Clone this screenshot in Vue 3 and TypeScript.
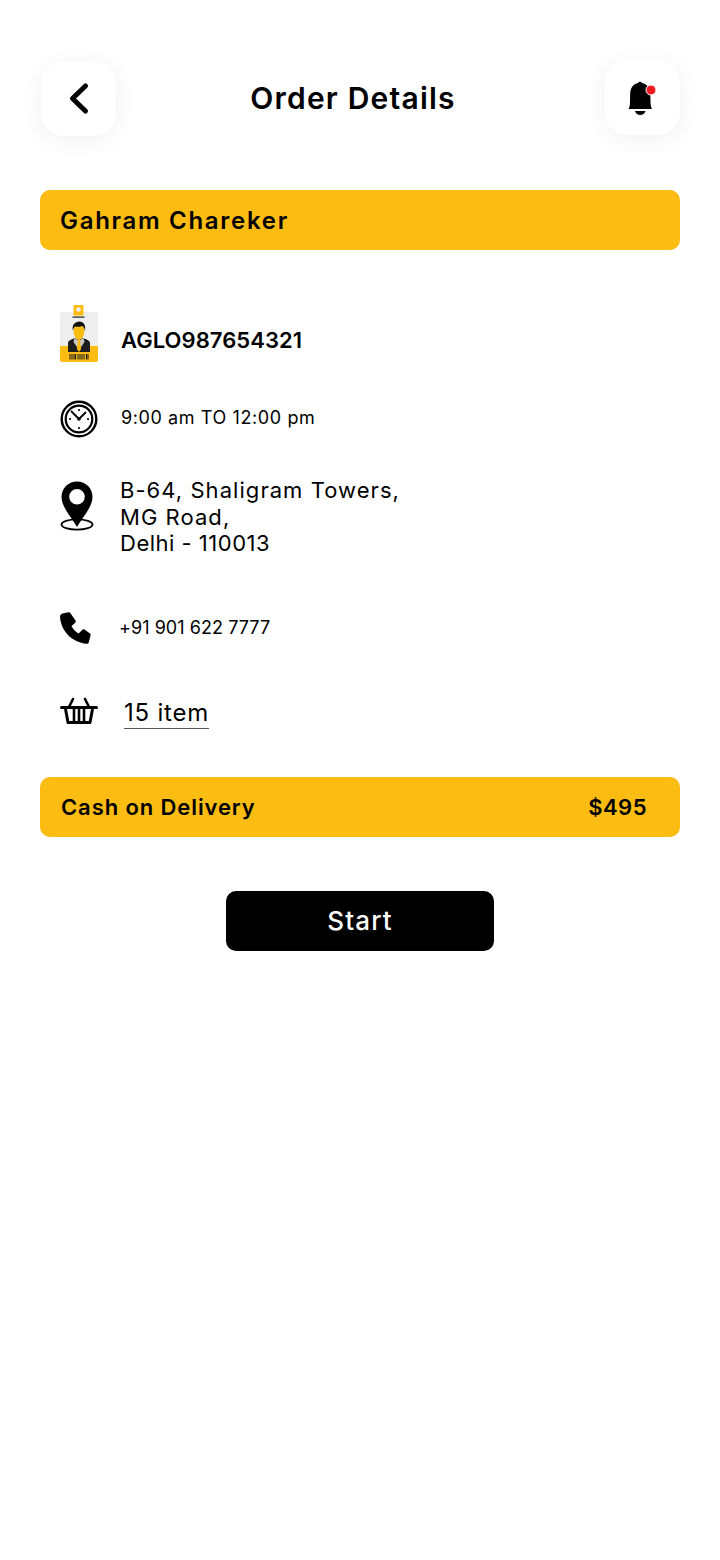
<script setup lang="ts">
const amount: string = '$495'
</script>

<template>
  <div class="page">
    <header class="head">
      <button class="tile back" aria-label="Back">
        <svg width="24" height="34" viewBox="0 0 24 34"><path d="M19.500 4 L6.500 16.500 L19.500 29" fill="none" stroke="#000" stroke-width="5" stroke-linecap="round" stroke-linejoin="round"/></svg>
      </button>
      <h1 class="title">Order Details</h1>
      <button class="tile bell" aria-label="Notifications">
        <svg width="34" height="38" viewBox="0 0 34 38">
          <path d="M11 4 a2.300 2.300 0 0 1 4 0 C20 5 23 9 23.300 14 L23.500 23 C23.600 26 24 28 25 30 H1.500 C2.500 28 3 26 3 23 L3.200 14 C3.500 9 6 5 11 4 Z" fill="#000"/>
          <path d="M8 32 H18.500 C17.800 34.500 15.500 36 13.200 36 S8.700 34.500 8 32 Z" fill="#000"/>
          <circle cx="24" cy="11" r="5" fill="#f01a1f" stroke="#fff" stroke-width="1"/>
        </svg>
      </button>
    </header>

    <div class="bar name-bar">Gahram Chareker</div>

    <section class="rows">
      <div class="row id-row">
        <svg class="ic" width="38" height="58" viewBox="0 0 38 58">
          <rect x="0" y="7" width="38" height="50" rx="2" fill="#eeeeee"/>
          <path d="M0 41 H38 V55 a2 2 0 0 1 -2 2 H2 a2 2 0 0 1 -2 -2 Z" fill="#fdbc11"/>
          <rect x="13.500" y="0" width="10" height="10.500" rx="1" fill="#fdbc11"/>
          <circle cx="18.500" cy="4.500" r="2.300" fill="#eee"/>
          <rect x="12.500" y="11.500" width="12" height="1.200" fill="#222"/>
          <path d="M8 47 V38 c0 -2 2 -3 7 -5 l4 2 l4 -2 c5 2 7 3 7 5 V47 Z" fill="#1d1d1d"/>
          <path d="M14.500 33 l4.500 3 l4.500 -3 l1 4 l-5.500 8 l-5.500 -8 Z" fill="#c9c9c9"/>
          <path d="M18 35 h2 l1.200 9 l-2.200 3 l-2.200 -3 Z" fill="#fdbc11"/>
          <ellipse cx="19" cy="26" rx="5.400" ry="9" fill="#fdbc11"/>
          <path d="M13 26 c-1.500 -6 2 -9.500 6.500 -9.500 c4 0 6.500 3.500 5.500 9.500 c-0.500 -3 -1.500 -4.500 -3 -5 c-2.500 1 -5 1 -7 0.500 c-1 1 -2 2.500 -2 4.500 Z" fill="#111"/>
          <path d="M10 49 v5.500 M12 49 v5.500 M14 49 v5.500 M15.500 49 v5.500 M18 49 v5.500 M20 49 v5.500 M22 49 v5.500 M24 49 v5.500 M26.500 49 v5.500 M28 49 v5.500" stroke="#222" stroke-width="1.100"/>
        </svg>
        <span class="code">AGLO987654321</span>
      </div>

      <div class="row time-row">
        <svg class="ic" width="38" height="38" viewBox="0 0 38 38">
          <circle cx="19" cy="19" r="17.300" fill="none" stroke="#000" stroke-width="2.400"/>
          <circle cx="19" cy="19" r="13.300" fill="none" stroke="#000" stroke-width="2.200"/>
          <path d="M19 19 L11.500 11.500 M19 19 L25.500 12.500" stroke="#000" stroke-width="1.800" stroke-linecap="round"/>
          <circle cx="19" cy="19" r="1.800" fill="#000"/>
          <circle cx="19" cy="10" r="1.100" fill="#000"/><circle cx="19" cy="28" r="1.100" fill="#000"/>
          <circle cx="10" cy="19" r="1.100" fill="#000"/><circle cx="28" cy="19" r="1.100" fill="#000"/>
        </svg>
        <span class="time">9:00 am TO 12:00 pm</span>
      </div>

      <div class="row addr-row">
        <svg class="ic" width="34" height="50" viewBox="0 0 34 50">
          <ellipse cx="17" cy="43.500" rx="15.500" ry="5.200" fill="none" stroke="#000" stroke-width="1.800"/>
          <path fill-rule="evenodd" d="M17 0.500 C8 0.500 1.500 7.500 1.500 16 C1.500 26 12 37 17 46 C22 37 32.500 26 32.500 16 C32.500 7.500 26 0.500 17 0.500 Z M17 8 a7.800 7.800 0 1 1 0 15.600 a7.800 7.800 0 1 1 0 -15.600 Z" fill="#000"/>
        </svg>
        <address class="addr">B-64, Shaligram Towers,<br>MG Road,<br><span class="zip">Delhi - 110013</span></address>
      </div>

      <div class="row phone-row">
        <svg class="ic" width="32" height="32" viewBox="0 0 32 32">
          <path d="M3.500 1.500 L9.500 0.300 C10.500 0.200 11 0.500 11.500 1.200 L16.500 8.500 C17 9.300 16.800 10 16.200 10.700 L12.500 14 C14 17 16.500 19.500 19.500 21.500 L23.500 17.800 C24.200 17.200 25 17.200 25.800 17.700 L31 21.500 C31.700 22 31.800 22.700 31.500 23.500 L29.800 30.200 C29.500 31.200 28.800 31.800 27.800 31.800 C13 30.500 2 19 1 5 C1 3 2 2 3.500 1.500 Z" fill="#000"/>
        </svg>
        <span class="phone">+91 901 622 7777</span>
      </div>

      <div class="row basket-row">
        <svg class="ic" width="38" height="28" viewBox="0 0 38 28">
          <path d="M1.500 10.500 H36.500" stroke="#000" stroke-width="3" stroke-linecap="round"/>
          <path d="M5.500 12 L8 25.500 H30 L32.500 12" fill="none" stroke="#000" stroke-width="3" stroke-linejoin="round"/>
          <path d="M14 12 V25 M19 12 V25 M24 12 V25" stroke="#000" stroke-width="2.600"/>
          <path d="M9 10 L13 2 M29 10 L25 2" stroke="#000" stroke-width="2.600" stroke-linecap="round"/>
        </svg>
        <span class="items">15 item</span>
      </div>
    </section>

    <div class="bar pay-bar"><span>Cash on Delivery</span><span class="amount">{{ amount }}</span></div>

    <div class="action"><button class="start">Start</button></div>
  </div>
</template>

<style scoped>
.page { width: 720px; min-height: 1560px; box-sizing: border-box; padding: 60px 40px 0; background: #fff; font-family: Inter, "Open Sans", sans-serif; color: #000; }
.head { display: flex; justify-content: space-between; align-items: center; height: 76px; }
.tile { width: 75px; height: 75px; padding: 0; border: 0; border-radius: 22px; background: #fff; box-shadow: 0 4px 24px rgba(0,0,0,.06); display: flex; align-items: center; justify-content: center; }
.back { margin: 1px 0 0 1px; }
.back svg { margin-right: 1px; }
.bell { margin-bottom: 1px; }
.bell svg { margin: 0 0 0 3px; }
.title { margin: 0 0 0 -15px; font-size: 30px; font-weight: 600; letter-spacing: 1.200px; line-height: 76px; }
.bar { height: 60px; box-sizing: border-box; background: #fdbc11; border-radius: 10px; display: flex; align-items: center; font-weight: 600; }
.name-bar { margin-top: 54px; padding-left: 20px; font-size: 24px; letter-spacing: 1.700px; }
.rows { display: flex; flex-direction: column; padding: 55px 0 0 20px; }
.row { display: flex; align-items: center; }
.ic { flex: none; display: block; }
.id-row { height: 58px; }
.code { margin: 12px 0 0 23px; font-size: 22px; font-weight: 600; letter-spacing: .05px; }
.time-row { margin-top: 37px; height: 38px; }
.time { margin: -4px 0 0 23px; font-size: 18px; letter-spacing: .6px; }
.addr-row { margin-top: 43px; align-items: flex-start; }
.addr-row .ic { margin-top: 0; }
.addr { margin-left: 26px; font-style: normal; font-size: 22px; line-height: 26.500px; letter-spacing: 1.050px; margin-top: -4px; }
.zip { letter-spacing: .5px; }
.phone-row { margin-top: 55px; height: 32px; }
.phone-row .ic { margin-left: -1px; }
.phone { margin: -1px 0 0 28px; font-size: 18px; letter-spacing: .05px; }
.basket-row { margin-top: 52px; height: 36px; }
.basket-row .ic { margin-top: -6px; }
.items { margin-left: 26px; font-size: 24px; letter-spacing: .8px; border-bottom: 1px solid #555; line-height: 30px; }
.pay-bar { margin-top: 45px; justify-content: space-between; padding: 0 33px 0 21px; font-size: 22px; letter-spacing: .9px; }
.amount { letter-spacing: .5px; }
.action { display: flex; justify-content: center; margin-top: 54px; }
.start { width: 268px; height: 60px; border: 0; border-radius: 10px; background: #000; color: #fff; font: 500 26px Inter, sans-serif; letter-spacing: 1.100px; }
</style>
